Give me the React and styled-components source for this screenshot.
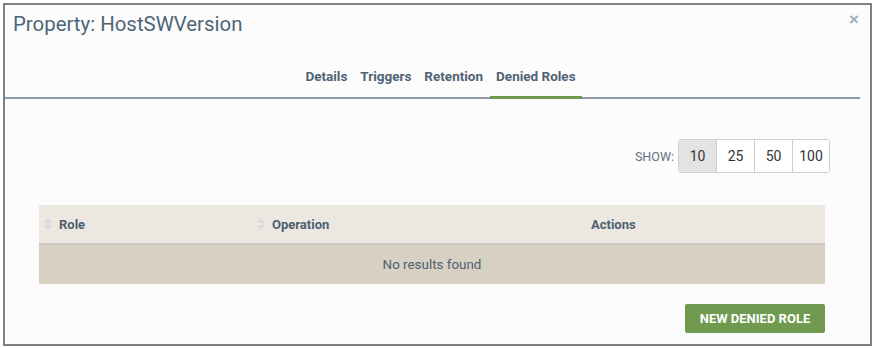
import React from 'react';
import styled, { createGlobalStyle } from 'styled-components';

const GlobalStyle = createGlobalStyle`
  body {
    margin: 0;
    background: #ffffff;
    font-family: Roboto, 'Liberation Sans', sans-serif;
  }
`;

const Modal = styled.div`
  box-sizing: border-box;
  margin: 3px 0 0 3px;
  width: 869px;
  height: 343px;
  border: 2px solid #808080;
  background: #fcfcfc;
  position: relative;
`;

const Header = styled.div`
  padding: 7px 0 0 8px;
`;

const Title = styled.h1`
  margin: 0;
  font-size: 20.4px;
  font-weight: 400;
  color: #4f6577;
  line-height: 25px;
`;

const Close = styled.button`
  position: absolute;
  top: 6px;
  right: 11px;
  border: none;
  background: none;
  padding: 0;
  font-size: 17px;
  line-height: 17px;
  font-weight: 700;
  color: #a3adb6;
  font-family: 'Liberation Sans', sans-serif;
`;

const Tabs = styled.div`
  display: flex;
  justify-content: center;
  margin: 32px 10px 0 0;
  border-bottom: 2px solid #8a9aa6;
  padding-left: 16px;
`;

const Tab = styled.div`
  padding: 0 6.5px 12px;
  margin-bottom: -2px;
  font-size: 13.5px;
  font-weight: 700;
  line-height: 15px;
  color: #4f6374;
  border-bottom: 3px solid ${p => (p.$active ? '#6e9a4f' : 'transparent')};
`;

const Content = styled.div`
  padding: 40px 44px 0 34px;
`;

const ShowRow = styled.div`
  display: flex;
  justify-content: flex-end;
  align-items: center;
  margin-right: -4px;
  gap: 4px;
`;

const ShowLabel = styled.span`
  font-size: 12.5px;
  color: #5f7282;
`;

const Pager = styled.div`
  display: flex;
  border: 1px solid #cfcfcf;
  border-radius: 3px;
  overflow: hidden;
`;

const PageButton = styled.div`
  box-sizing: border-box;
  height: 32px;
  width: ${p => p.$w}px;
  display: flex;
  align-items: center;
  justify-content: center;
  font-size: 14px;
  color: #333;
  background: ${p => (p.$active ? '#e3e3e3' : '#ffffff')};
  border-left: ${p => (p.$first ? 'none' : '1px solid #cfcfcf')};
`;

const Table = styled.div`
  margin-top: 32px;
  width: 786px;
`;

const HeadRow = styled.div`
  display: grid;
  grid-template-columns: 213px 319px 1fr;
  height: 38px;
  background: #ece7e0;
  border-bottom: 2px solid #c9c5bf;
  align-items: center;
`;

const HeadCell = styled.div`
  display: flex;
  align-items: center;
  padding-left: ${p => (p.$plain ? 20 : 5)}px;
  font-size: 13px;
  font-weight: 700;
  color: #4d6172;
`;

const SortIcon = styled.span`
  display: inline-flex;
  width: 10px;
  margin-right: 5px;
  svg {
    display: block;
  }
`;

const EmptyRow = styled.div`
  height: 39px;
  background: #d8d0c3;
  display: flex;
  align-items: center;
  justify-content: center;
  font-size: 13.4px;
  color: #4f6070;
`;

const Footer = styled.div`
  display: flex;
  justify-content: flex-end;
  width: 786px;
  margin-top: 20px;
`;

const PrimaryButton = styled.button`
  height: 29px;
  width: 140px;
  border: none;
  border-radius: 2px;
  background: #6f9a50;
  color: #ffffff;
  font-family: Roboto, 'Liberation Sans', sans-serif;
  font-size: 13px;
  font-weight: 700;
  text-transform: uppercase;
`;

const Sort = () => (
  <SortIcon>
    <svg width="8" height="14" viewBox="0 0 8 14">
      <path d="M4 1 L7.5 6 L0.5 6 Z" fill="#d5d9dd" />
      <path d="M4 13 L7.5 8 L0.5 8 Z" fill="#d5d9dd" />
    </svg>
  </SortIcon>
);

const App = () => (
  <>
    <GlobalStyle />
    <Modal>
      <Close>×</Close>
      <Header>
        <Title>Property: HostSWVersion</Title>
      </Header>
      <Tabs>
        <Tab>Details</Tab>
        <Tab>Triggers</Tab>
        <Tab>Retention</Tab>
        <Tab $active>Denied Roles</Tab>
      </Tabs>
      <Content>
        <ShowRow>
          <ShowLabel>SHOW:</ShowLabel>
          <Pager>
            <PageButton $first $active $w={37}>10</PageButton>
            <PageButton $w={38}>25</PageButton>
            <PageButton $w={38}>50</PageButton>
            <PageButton $w={37}>100</PageButton>
          </Pager>
        </ShowRow>
        <Table>
          <HeadRow>
            <HeadCell><Sort />Role</HeadCell>
            <HeadCell><Sort />Operation</HeadCell>
            <HeadCell $plain>Actions</HeadCell>
          </HeadRow>
          <EmptyRow>No results found</EmptyRow>
        </Table>
        <Footer>
          <PrimaryButton>New Denied Role</PrimaryButton>
        </Footer>
      </Content>
    </Modal>
  </>
);

export default App;
